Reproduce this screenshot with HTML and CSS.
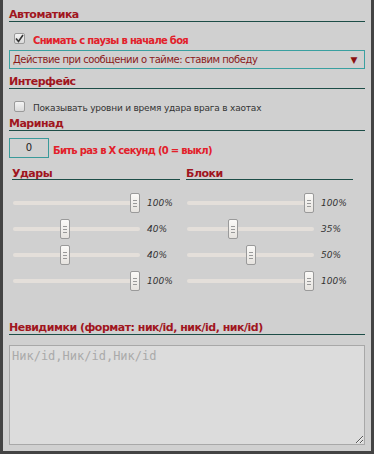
FILE: index.html
```html
<!DOCTYPE html>
<html lang="ru">

<head>
  <meta charset="UTF-8">
  <meta name="viewport" content="width=device-width, initial-scale=1.0">
  <title>Настройки</title>
  <link rel="stylesheet" href="styles.css">
</head>

<body>
  <div class="panel">
    <!-- Автоматика -->
    <h3 class="head">Автоматика</h3>
    <label class="chkRow">
      <span class="chk on"><svg width="9" height="9" viewBox="0 0 9 9"><path d="M1 4.5 L3.5 7.5 L8 1" fill="none" stroke="#333" stroke-width="1.6"/></svg></span>
      <span class="redTx">Снимать с паузы в начале боя</span>
    </label>
    <div class="select">
      <span>Действие при сообщении о тайме: ставим победу</span>
      <span class="arr">▼</span>
    </div>

    <!-- Интерфейс -->
    <h3 class="head head2">Интерфейс</h3>
    <label class="chkRow chkRow2">
      <span class="chk"></span>
      <span class="grayTx">Показывать уровни и время удара врага в хаотах</span>
    </label>

    <!-- Маринад -->
    <h3 class="head head3">Маринад</h3>
    <div class="marinad">
      <div class="num">0</div>
      <span class="redTx">Бить раз в X секунд (0 = выкл)</span>
    </div>

    <div class="cols">
      <div class="col">
        <h4 class="subhead">Удары</h4>
        <div class="slRow"><div class="track"><span class="knob" style="--v:1"></span></div><i>100%</i></div>
        <div class="slRow"><div class="track"><span class="knob" style="--v:0.4"></span></div><i>40%</i></div>
        <div class="slRow"><div class="track"><span class="knob" style="--v:0.4"></span></div><i>40%</i></div>
        <div class="slRow"><div class="track"><span class="knob" style="--v:1"></span></div><i>100%</i></div>
      </div>
      <div class="col">
        <h4 class="subhead">Блоки</h4>
        <div class="slRow"><div class="track"><span class="knob" style="--v:1"></span></div><i>100%</i></div>
        <div class="slRow"><div class="track"><span class="knob" style="--v:0.35"></span></div><i>35%</i></div>
        <div class="slRow"><div class="track"><span class="knob" style="--v:0.5"></span></div><i>50%</i></div>
        <div class="slRow"><div class="track"><span class="knob" style="--v:1"></span></div><i>100%</i></div>
      </div>
    </div>

    <!-- Невидимки -->
    <h3 class="head head4">Невидимки (формат: ник/id, ник/id, ник/id)</h3>
    <textarea class="area" placeholder="Ник/id,Ник/id,Ник/id"></textarea>
  </div>
</body>

</html>
```

FILE: styles.css
```css
body {
  margin: 0;
  background: #444;
}

.panel {
  box-sizing: border-box;
  width: 374px;
  height: 454px;
  padding: 8px 6px 0 6px;
  border: 3px solid #444;
  border-top: 0;
  background: #d0d0d0;
  font-family: "DejaVu Sans", Verdana, sans-serif;
  display: flex;
  flex-direction: column;
}

.head {
  flex: none;
  margin: 0;
  font-size: 11px;
  line-height: 13px;
  font-weight: bold;
  letter-spacing: -0.5px;
  color: #a0161e;
  border-bottom: 1px solid #1d4d47;
}

.head2 {
  margin-top: 6px;
}

.head3 {
  margin-top: 5px;
}

.head4 {
  margin-top: 24px;
}

.chkRow {
  flex: none;
  display: flex;
  align-items: center;
  margin: 10px 0 0 5px;
  height: 12px;
}

.chkRow2 {
  margin-top: 11px;
}

.chk {
  box-sizing: border-box;
  width: 11px;
  height: 11px;
  border: 1px solid #9a9a9a;
  border-radius: 2px;
  background: linear-gradient(#f4f4f4, #dadada);
  margin-right: 8px;
  display: flex;
  align-items: center;
  justify-content: center;
}

.redTx {
  color: #e2202a;
  font-weight: bold;
  font-size: 10px;
  letter-spacing: -0.7px;
  padding-top: 4px;
}

.grayTx {
  color: #333;
  font-size: 9px;
  letter-spacing: -0.2px;
  padding-top: 3px;
}

.select {
  flex: none;
  box-sizing: border-box;
  height: 19px;
  margin-top: 6px;
  border: 1px solid #3aa0a0;
  padding: 0 7px 0 3px;
  display: flex;
  align-items: center;
  justify-content: space-between;
  color: #8a1a1a;
  font-size: 10px;
  letter-spacing: -0.45px;
}

.arr {
  font-size: 9px;
  color: #8a1010;
}

.marinad {
  flex: none;
  display: flex;
  align-items: center;
  height: 20px;
  margin-top: 7px;
}

.num {
  box-sizing: border-box;
  width: 40px;
  height: 20px;
  border: 1px solid #3a9a9a;
  text-align: center;
  line-height: 18px;
  font-size: 10px;
  color: #222;
  margin-right: 4px;
}

.cols {
  flex: none;
  display: grid;
  grid-template-columns: 168px 167px;
  column-gap: 6px;
  padding-left: 3px;
  margin-top: 11px;
}

.subhead {
  margin: 0 0 13px 0;
  font-size: 11px;
  line-height: 10px;
  font-weight: bold;
  letter-spacing: -0.5px;
  color: #a0161e;
  border-bottom: 1px solid #1d4d47;
}

.slRow {
  display: flex;
  align-items: center;
  height: 20px;
  margin-bottom: 6px;
}

.track {
  position: relative;
  width: 127px;
  height: 4px;
  margin-left: 1px;
  border-radius: 2px;
  background: #e4dfda;
}

.knob {
  position: absolute;
  top: -8px;
  left: calc(var(--v) * (100% - 10px));
  box-sizing: border-box;
  width: 10px;
  height: 20px;
  border: 1px solid #9a9a9a;
  border-radius: 2px;
  background: linear-gradient(#fbfaf8, #e6e3df);
}

.knob::after {
  content: "";
  position: absolute;
  left: 2px;
  top: 6px;
  width: 4px;
  height: 5px;
  border-top: 1px solid #999;
  border-bottom: 1px solid #999;
  background: linear-gradient(transparent 2px, #999 2px, #999 3px, transparent 3px);
}

.slRow i {
  margin-left: 7px;
  font-size: 9px;
  color: #333;
}

.area {
  flex: none;
  box-sizing: border-box;
  width: 356px;
  height: 100px;
  margin-top: 10px;
  border: 1px solid #a8a8a8;
  background: #dcdcdc;
  padding: 3px 2px;
  font-family: "DejaVu Sans Mono", monospace;
  font-size: 12px;
  outline: none;
}

.area::placeholder {
  color: #aaa;
}
```
